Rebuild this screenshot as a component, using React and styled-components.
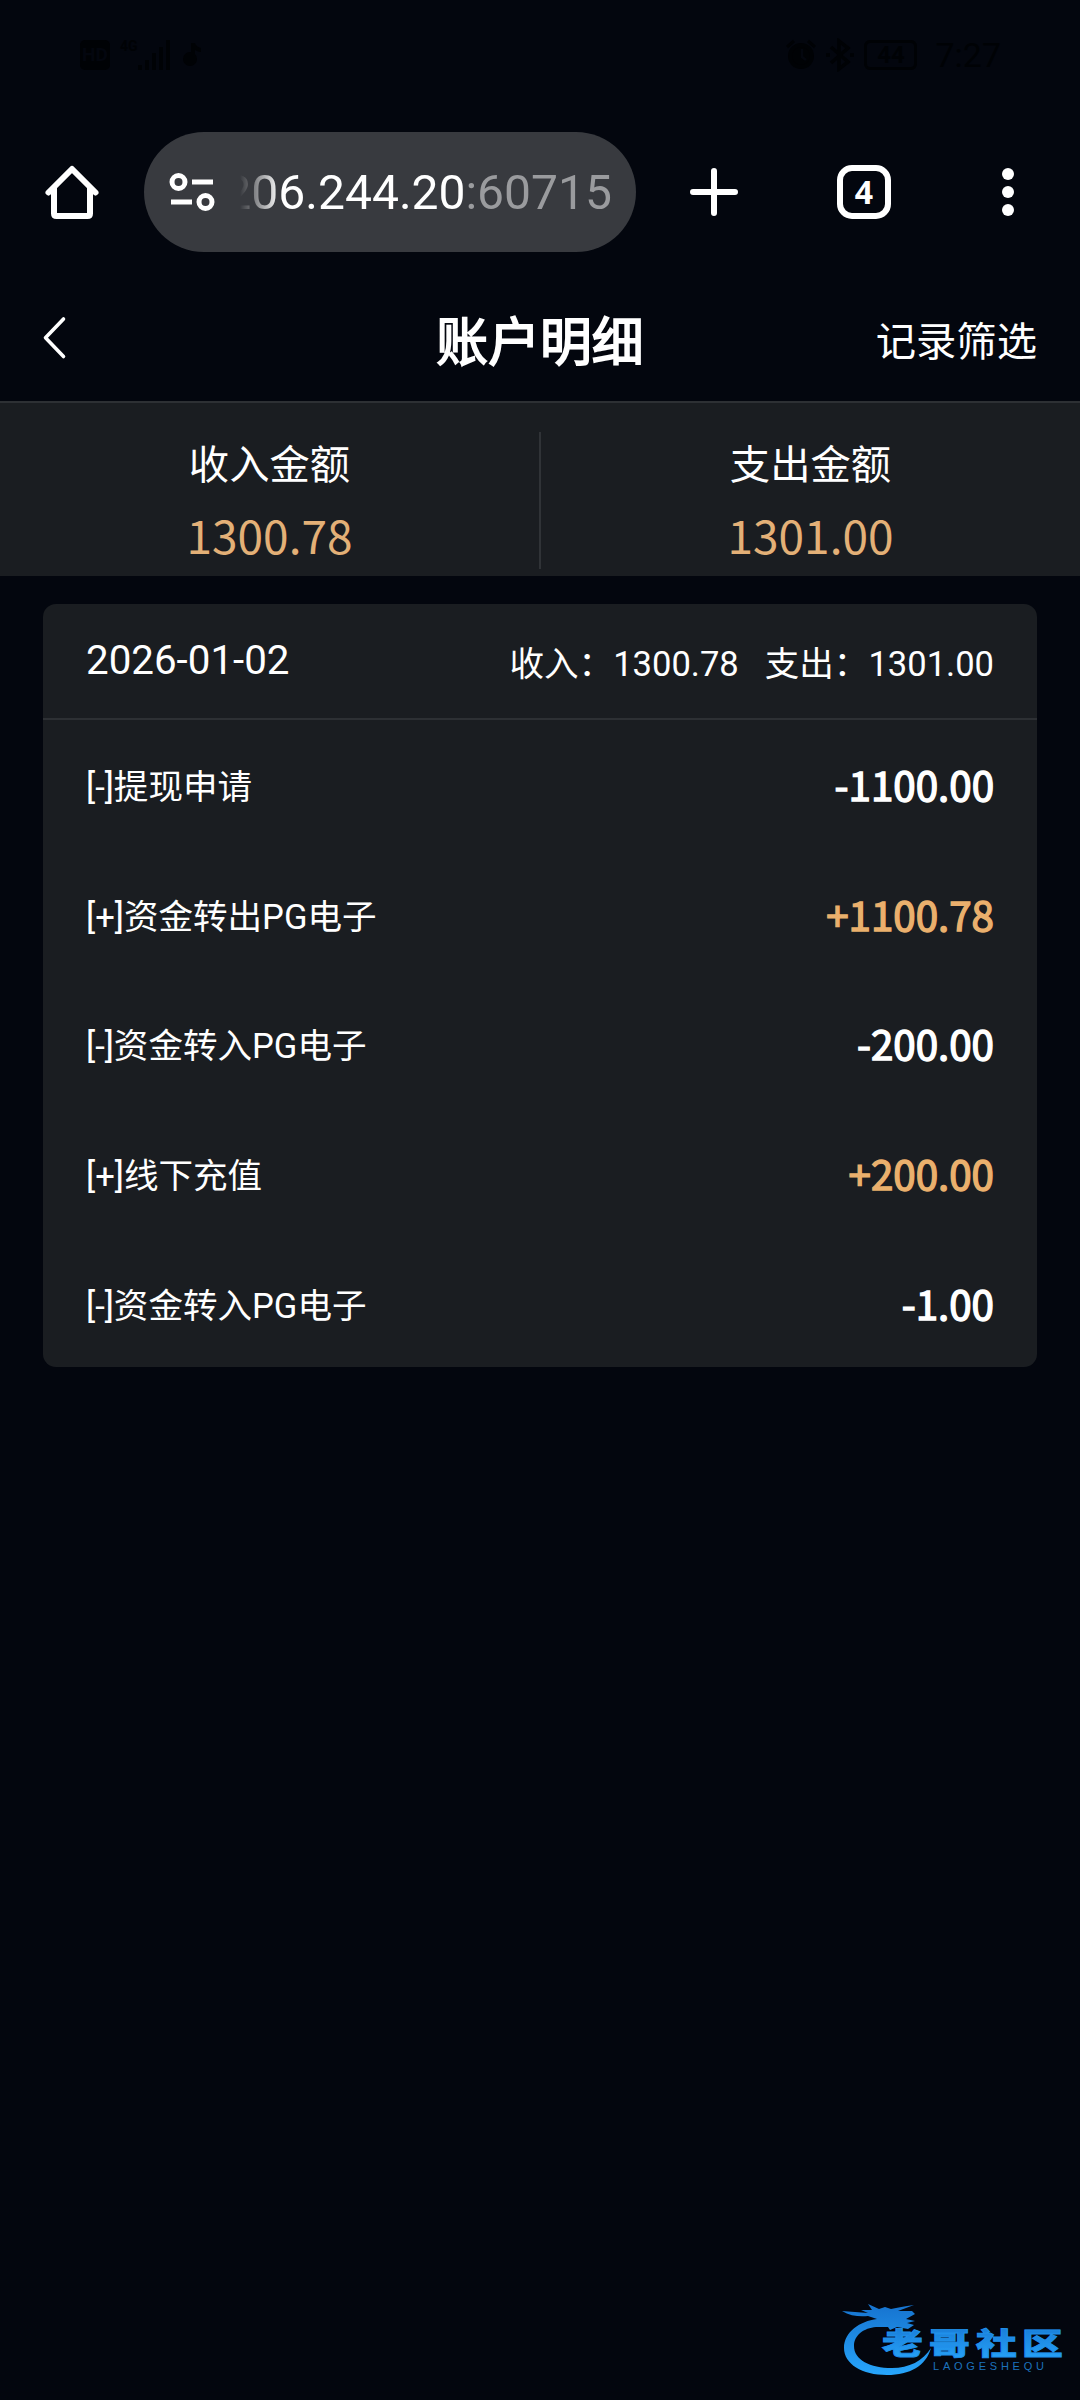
import React from 'react';
import styled, { createGlobalStyle } from 'styled-components';

const records = [
  { id: 1, label: '[-]提现申请', amount: '-1100.00' },
  { id: 2, label: '[+]资金转出PG电子', amount: '+1100.78', income: true },
  { id: 3, label: '[-]资金转入PG电子', amount: '-200.00' },
  { id: 4, label: '[+]线下充值', amount: '+200.00', income: true },
  { id: 5, label: '[-]资金转入PG电子', amount: '-1.00' },
];

const HomeIcon = () => (
  <svg width="56" height="56" viewBox="0 0 56 56" fill="none" stroke="#fff" strokeWidth="6">
    <path d="M4.500 28.500 28 5 51.500 28.500" strokeLinecap="round" strokeLinejoin="round" />
    <path d="M10 24V49.500Q10 52 12.500 52H43.500Q46 52 46 49.500V24" />
  </svg>
);

const TuneIcon = () => (
  <svg width="46" height="40" viewBox="0 0 46 40" fill="none" stroke="#fff" strokeWidth="5">
    <circle cx="9.500" cy="10" r="6.500" />
    <path d="M23 10H44M2 30H23" />
    <circle cx="36.500" cy="30" r="6.500" />
  </svg>
);

const PlusIcon = () => (
  <svg width="48" height="48" viewBox="0 0 48 48" stroke="#fff" strokeWidth="6" strokeLinecap="round">
    <path d="M24 3V45M3 24H45" />
  </svg>
);

const MoreIcon = () => (
  <svg width="12" height="48" viewBox="0 0 12 48" fill="#fff">
    <circle cx="6" cy="6" r="6" />
    <circle cx="6" cy="24" r="6" />
    <circle cx="6" cy="42" r="6" />
  </svg>
);

const BackIcon = () => (
  <svg width="24" height="44" viewBox="0 0 24 44" fill="none" stroke="#fff" strokeWidth="3.600" strokeLinecap="round" strokeLinejoin="round">
    <path d="M20.500 3 2.500 21.800 20.500 40.500" />
  </svg>
);

const SignalIcon = () => (
  <svg width="34" height="32" viewBox="0 0 34 32" fill="#000205">
    <path d="M0 26h4v5H0zM7 21h4v10H7zM14 14h4v17h-4zM21 8h4v23h-4zM28 1h4v30h-4z" />
  </svg>
);

const NoteIcon = () => (
  <svg width="20" height="26" viewBox="0 0 20 26" fill="#000205">
    <circle cx="8" cy="17" r="7" />
    <path d="M9 1h4q1 4 6 5v4q-3 0-6-2v10H9z" />
  </svg>
);

const AlarmIcon = () => (
  <svg width="30" height="32" viewBox="0 0 30 32" fill="none" stroke="#000205" strokeWidth="4">
    <circle cx="15" cy="17" r="11" fill="#000205" />
    <path d="M1 8l7-6M29 8l-7-6" strokeWidth="3" />
    <path d="M16 10v8l4 3" stroke="#03060e" strokeWidth="2.500" />
  </svg>
);

const BluetoothIcon = () => (
  <svg width="28" height="34" viewBox="0 0 28 34" fill="none" stroke="#000205" strokeWidth="3.500">
    <path d="M5 9 22 24 13 31V3L22 10 5 25" />
    <path d="M0 17h4M24 17h4" />
  </svg>
);

const Watermark = () => (
  <WatermarkSvg width="226" height="76" viewBox="0 0 226 76">
    <defs>
      <linearGradient id="blue" x1="0" y1="0" x2="0" y2="1">
        <stop offset="0" stopColor="#1673cf" />
        <stop offset="1" stopColor="#27a5fb" />
      </linearGradient>
    </defs>
    <path
      fill="url(#blue)"
      d="M37 17C20 19 4 30 4 46C4 62 22 73 47 73C70 73 86 64 91 46C83 59 69 66 52 66C30 66 14 58 14 44C14 33 24 26 36 25L48 25 50 28 57 25 68 27 74 23 67 21 75 19 66 17 75 12 72 9 58 9 74 3C64 4 58 6 51 7L45 5 39 7 28 2 32 8 21 8 28 11 2 9C10 14 20 15 28 14Z"
    />
    <g fill="url(#blue)" fontFamily="'Noto Sans CJK SC', sans-serif" fontWeight="900" fontSize="30" stroke="#2090ea" strokeWidth="0.900">
      <text transform="translate(42 51.500) scale(1.360 1)">老</text>
      <text transform="translate(89 51.500) scale(1.360 1)">哥</text>
      <text transform="translate(136 51.500) scale(1.360 1)">社</text>
      <text transform="translate(182 51.500) scale(1.360 1)">区</text>
    </g>
    <text x="93" y="68" fill="#1c72bd" fontFamily="'Liberation Sans', sans-serif" fontSize="11" textLength="111">
      LAOGESHEQU
    </text>
  </WatermarkSvg>
);

const App = () => {
  return (
    <>
      <GlobalStyle />
      <Page>
        <StatusBar>
          <StatusGroup>
            <HdBadge>HD</HdBadge>
            <NetworkType>4G</NetworkType>
            <SignalIcon />
            <NoteIcon />
          </StatusGroup>
          <StatusGroup>
            <AlarmIcon />
            <BluetoothIcon />
            <Battery>44</Battery>
            <Clock>7:27</Clock>
          </StatusGroup>
        </StatusBar>

        <Toolbar>
          <ToolButton><HomeIcon /></ToolButton>
          <AddressBar>
            <TuneIcon />
            <Url>
              <span>206.244.20<Port>:60715</Port></span>
            </Url>
          </AddressBar>
          <ToolButton $width="156px"><PlusIcon /></ToolButton>
          <ToolButton><TabCount>4</TabCount></ToolButton>
          <ToolButton><MoreIcon /></ToolButton>
        </Toolbar>

        <NavBar>
          <NavSide><BackIcon /></NavSide>
          <Title>账户明细</Title>
          <NavSide $end>记录筛选</NavSide>
        </NavBar>

        <Summary>
          <SummaryItem>
            <SummaryLabel>收入金额</SummaryLabel>
            <SummaryValue>1300.78</SummaryValue>
          </SummaryItem>
          <SummaryItem>
            <SummaryLabel>支出金额</SummaryLabel>
            <SummaryValue>1301.00</SummaryValue>
          </SummaryItem>
        </Summary>

        <Card>
          <CardHeader>
            <CardDate>2026-01-02</CardDate>
            <CardTotals>
              <span>收入：1300.78</span>
              <span>支出：1301.00</span>
            </CardTotals>
          </CardHeader>
          {records.map(({ id, label, amount, income }) => (
            <Row key={id}>
              <RowLabel>{label}</RowLabel>
              <Amount $income={income}>{amount}</Amount>
            </Row>
          ))}
        </Card>
        <Watermark />
      </Page>
    </>
  );
};

export default App;

const GlobalStyle = createGlobalStyle`
  * {
    box-sizing: border-box;
  }

  body {
    margin: 0;
    background: #03060e;
  }

  h1 {
    margin: 0;
  }

  svg {
    display: block;
    flex-shrink: 0;
  }
`

const Page = styled.div`
  position: relative;
  display: flex;
  flex-direction: column;
  width: 1080px;
  height: 2400px;
  overflow: hidden;
  background: #03060e;
  color: #fff;
  font-family: Roboto, 'Noto Sans CJK SC', sans-serif;
`

const StatusBar = styled.header`
  display: flex;
  justify-content: space-between;
  align-items: flex-start;
  height: 132px;
  padding: 38px 79px 0 80px;
  color: #000205;
`

const StatusGroup = styled.div`
  display: flex;
  align-items: center;
  gap: 10px;
  height: 34px;
`

const HdBadge = styled.span`
  width: 30px;
  height: 30px;
  border-radius: 5px;
  background: #000205;
  color: #03060e;
  font-size: 19px;
  font-weight: 700;
  line-height: 30px;
  text-align: center;
`

const NetworkType = styled.span`
  align-self: flex-start;
  width: 18px;
  margin-right: -10px;
  font-size: 14px;
  font-weight: 700;
`

const Battery = styled.span`
  width: 53px;
  height: 30px;
  border: 3px solid #000205;
  border-radius: 6px;
  font-size: 24px;
  font-weight: 700;
  line-height: 24px;
  text-align: center;
`

const Clock = styled.span`
  margin-left: 8px;
  font-size: 34px;
  line-height: 34px;
`

const Toolbar = styled.div`
  display: flex;
  align-items: center;
  height: 120px;
`

const ToolButton = styled.button`
  display: flex;
  justify-content: center;
  align-items: center;
  width: ${({ $width }) => $width || '144px'};
  height: 120px;
  padding: 0;
  border: 0;
  background: none;
  color: #fff;
`

const AddressBar = styled.div`
  display: flex;
  align-items: center;
  gap: 25px;
  width: 492px;
  height: 120px;
  padding: 0 24px 0 25px;
  border-radius: 60px;
  background: #383a3f;
`

const Url = styled.div`
  display: flex;
  flex: 1;
  justify-content: flex-end;
  overflow: hidden;
  padding-top: 1px;
  font-size: 48px;
  line-height: 60px;
  white-space: nowrap;
  mask-image: linear-gradient(to right, transparent, #000 40px);
`

const Port = styled.span`
  color: #9a9b9e;
`

const TabCount = styled.span`
  width: 54px;
  height: 54px;
  border: 6px solid #fff;
  border-radius: 15px;
  font-family: 'Noto Sans', sans-serif;
  font-size: 32px;
  font-weight: 700;
  line-height: 42px;
  text-align: center;
`

const NavBar = styled.nav`
  display: flex;
  justify-content: space-between;
  align-items: center;
  height: 151px;
  padding: 23px 43px 0;
  border-bottom: 2px solid #2d3034;
`

const NavSide = styled.div`
  display: flex;
  justify-content: ${({ $end }) => ($end ? 'flex-end' : 'flex-start')};
  width: 200px;
  font-size: 40.32px;
`

const Title = styled.h1`
  font-size: 51.84px;
  font-weight: 400;
  -webkit-text-stroke: 1.8px #fff;
`

const Summary = styled.section`
  display: flex;
  height: 173px;
  padding: 29px 0 7px;
  background: #1a1d21;
`

const SummaryItem = styled.div`
  display: flex;
  flex: 1;
  flex-direction: column;
  align-items: center;
  padding-top: 4px;

  &:first-child {
    border-right: 2px solid #303337;
  }
`

const SummaryLabel = styled.span`
  font-size: 40.32px;
  line-height: 60px;
`

const SummaryValue = styled.span`
  margin-top: 5px;
  color: #e3b077;
  font-family: 'Noto Sans CJK SC', sans-serif;
  font-size: 46px;
  line-height: 66px;
`

const Card = styled.section`
  width: 994px;
  height: 763px;
  margin: 28px 43px 0;
  border-radius: 13px;
  background: #1a1d21;
`

const CardHeader = styled.div`
  display: flex;
  justify-content: space-between;
  align-items: center;
  height: 116px;
  padding: 0 43px;
  border-bottom: 2px solid #2d3034;
`

const CardDate = styled.span`
  padding-bottom: 2px;
  font-size: 40.32px;
`

const CardTotals = styled.div`
  display: flex;
  gap: 26px;
  font-size: 34.56px;
`

const Row = styled.div`
  display: flex;
  justify-content: space-between;
  align-items: center;
  height: 129.6px;
  padding: 0 43px;
`

const RowLabel = styled.span`
  padding-bottom: 1px;
  font-size: 34.56px;
`

const Amount = styled.span`
  padding-bottom: 2px;
  color: ${({ $income }) => ($income ? '#eab06d' : '#fff')};
  font-family: 'Noto Sans CJK SC', sans-serif;
  font-size: 40.32px;
  -webkit-text-stroke: 1.4px currentColor;
`

// sits over the page in the bottom right corner
const WatermarkSvg = styled.svg`
  position: absolute;
  right: 14px;
  bottom: 22px;
`
